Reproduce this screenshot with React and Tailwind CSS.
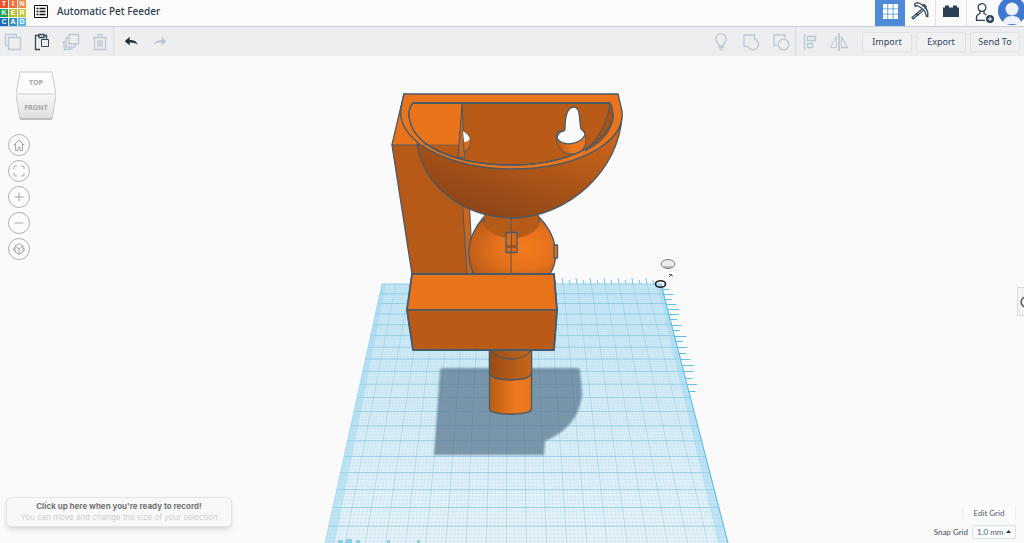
import React from "react";

const GRID = { left: 382, right: 661, top: 284, bottom: 543, bottomLeft: 325, bottomRight: 728 };

const edgeX = (t, y) => {
  const k = (y - GRID.top) / (GRID.bottom - GRID.top);
  const l = GRID.left + (GRID.bottomLeft - GRID.left) * k;
  const r = GRID.right + (GRID.bottomRight - GRID.right) * k;
  return l + (r - l) * t;
};

// rows get wider apart towards the viewer
const rowY = (n) => -299 + 583 / (1 - 0.0163 * n);

const columns = (count) =>
  Array.from({ length: count + 1 }, (_, i) => {
    const t = i / count;
    return `M${edgeX(t, 284).toFixed(1)} 284L${edgeX(t, 543).toFixed(1)} 543`;
  }).join("");

const rows = (step) => {
  let d = "";
  for (let n = 0; rowY(n) < 543; n += step) {
    const y = rowY(n);
    d += `M${edgeX(0, y).toFixed(1)} ${y.toFixed(1)}L${edgeX(1, y).toFixed(1)} ${y.toFixed(1)}`;
  }
  return d;
};

const sideTicks = Array.from({ length: 19 }, (_, i) => {
  const y = rowY(i * 0.5 + 0.5);
  const x = edgeX(1, y);
  return `M${x.toFixed(1)} ${Math.round(y) + 0.5}h${i % 5 === 4 ? 12 : i % 2 ? 10 : 7}`;
}).join("");

const topTicks = Array.from({ length: 15 }, (_, i) => `M${556 + i * 7} 284l-1 -${i % 2 ? 6 : 4}`).join("");

const Icon = ({ children, className = "size-5", ...rest }) => (
  <svg
    viewBox="0 0 20 20"
    fill="none"
    stroke="currentColor"
    strokeWidth="1.3"
    className={className}
    aria-hidden="true"
    {...rest}
  >
    {children}
  </svg>
);

const logoTiles = [
  ["T", "bg-[#f0502d]"],
  ["I", "bg-[#f2703a]"],
  ["N", "bg-[#f58a4b]"],
  ["K", "bg-[#1fa35b]"],
  ["E", "bg-[#b3bd2c]"],
  ["R", "bg-[#c3c43c]"],
  ["C", "bg-[#1668b5]"],
  ["A", "bg-[#2e8fcb]"],
  ["D", "bg-[#54b3df]"],
];

const Logo = () => (
  <a href="#home" aria-label="Tinkercad" className="grid h-[26px] w-[26px] shrink-0 grid-cols-3 content-end gap-px">
    {logoTiles.map(([letter, color]) => (
      <span
        key={letter}
        className={`flex h-2 items-center justify-center font-['Liberation_Sans',sans-serif] text-[7px] leading-[8px] font-bold text-white ${color}`}
      >
        {letter}
      </span>
    ))}
  </a>
);

const Header = () => (
  <header className="flex h-[27px] items-center border-b border-[#c5cfdd] bg-[#fbfbfb]">
    <Logo />
    <button aria-label="Designs" className="mb-1 ml-2 text-[#111]">
      <svg viewBox="0 0 14 13" fill="none" stroke="currentColor" className="h-[13px] w-[14px]" aria-hidden="true">
        <path d="M.5.5h13v12H.5z" strokeWidth="1" />
        <path d="M2.5 3.5h2M2.5 6.5h2M2.5 9.5h2M5.5 3.5h6M5.5 6.5h6M5.5 9.5h6" strokeWidth="1.3" />
      </svg>
    </button>
    <h1 className="mb-1 ml-[9px] font-['Noto_Sans','Open_Sans',sans-serif] text-[10px] leading-4 font-medium text-[#2c3e52]">
      Automatic Pet Feeder
    </h1>
    <div className="ml-auto flex h-full items-center text-[#2b3f55]">
      <button aria-label="Workplane" className="flex h-full w-[30px] items-center justify-center bg-[#4f8ad6] text-white">
        <svg viewBox="0 0 15 15" fill="currentColor" className="mb-1 size-[15px]" aria-hidden="true">
          <path d="M0 0h4.4v4.4H0zM5.2 0h4.5v4.4H5.2zM10.5 0H15v4.4h-4.5zM0 5.2h4.4v4.5H0zM5.2 5.2h4.5v4.5H5.2zM10.5 5.2H15v4.5h-4.5zM0 10.5h4.4V15H0zM5.2 10.5h4.5V15H5.2zM10.5 10.5H15V15h-4.5z" />
        </svg>
      </button>
      <button aria-label="Blocks" className="flex h-full w-[31px] items-center justify-center border-r border-[#dde3ea]">
        <Icon strokeWidth="1.2" className="mb-1 size-5">
          <path d="M4.5 3.2 7 1.6c4.8.8 9.6 5.2 10.8 9.6v4.3l-1.5-.3c-.4-4.4-4.2-8.6-9.3-10.7l-1.7.9zM12.2 5.3l2-1.8 2.2 2.2-1.8 2M11.8 8.2 2 16.6 3.2 18 13 9.6M7 12.3l2 2" />
        </Icon>
      </button>
      <button aria-label="Bricks" className="flex h-full w-[31px] items-center justify-center border-r border-[#dde3ea]">
        <svg viewBox="0 0 16 12" fill="currentColor" className="mb-1 h-3 w-4" aria-hidden="true">
          <path d="M0 2.500h2V.5h4v2h4v-2h4v2h2V12H0z" />
        </svg>
      </button>
      <button aria-label="Invite people" className="flex h-full w-[31px] items-center justify-center">
        <Icon strokeWidth="1.3" className="ml-1 size-5">
          <circle cx="7" cy="4.500" r="3.900" />
          <path d="M5 8v2.500c-2 1-3.500 2-3.500 3.500v3.300h8.500M9 8v2.500l2.500 1.500" />
          <circle cx="15" cy="16" r="4" fill="currentColor" stroke="none" />
          <path d="M12.800 16h4.400M15 13.800v4.400" stroke="white" strokeWidth="1" />
        </Icon>
      </button>
      <button aria-label="Account" className="h-full w-[26px] overflow-hidden">
        <svg viewBox="0 0 26 26" className="h-[26px] w-[26px]" aria-hidden="true">
          <circle cx="14" cy="11" r="14" fill="#3f78d0" />
          <circle cx="14" cy="9" r="6.500" fill="#eef3fb" />
          <path d="M5 24c0-5 3-8 9-8s9 3 9 8z" fill="#eef3fb" />
        </svg>
      </button>
    </div>
  </header>
);

const ToolButton = ({ label, className = "", children }) => (
  <button aria-label={label} className={`flex size-5 shrink-0 items-center justify-center ${className}`}>
    {children}
  </button>
);

const Divider = () => <span className="h-full w-px bg-[#d3dae2]" />;

const Toolbar = () => (
  <div className="flex h-[29px] items-center bg-[#eceef0] text-[#bcc8d4]">
    <div className="flex h-full items-center gap-[9px] pl-[3px]">
      <ToolButton label="Copy">
        <Icon>
          <path d="M5.500 13.500H2.500v-11h11v3M5.500 5.500h12v12h-12z" />
        </Icon>
      </ToolButton>
      <ToolButton label="Paste" className="text-[#3a444e]">
        <Icon>
          <path d="M8 17.500H3.500v-14H7M12 3.500h2.500V7M7 2.500h5v3H7z" />
          <path d="M9.500 7.500h7v7h-7z" strokeWidth="1" />
        </Icon>
      </ToolButton>
      <ToolButton label="Duplicate">
        <Icon>
          <path d="M8 2.500h9.500v9.500H8zM8 6H5v9h9v-3M5 9.500 2.500 10l1 7.500 8-.5" />
        </Icon>
      </ToolButton>
      <ToolButton label="Delete">
        <Icon>
          <path d="M3 5.500h14M8 5V2.500h4V5M4.500 6v11.500h11V6M8 8v7M10 8v7M12 8v7" />
        </Icon>
      </ToolButton>
    </div>
    <div className="flex h-full items-center gap-2 pl-[3px]">
      <Divider />
      <ToolButton label="Undo" className="text-[#22303c]">
        <Icon className="size-4" stroke="none" fill="currentColor">
          <path d="M1 9 7 3.500v4c6 0 9 2 10 6-2-2-6-3-10-2.800v3.800z" />
        </Icon>
      </ToolButton>
      <ToolButton label="Redo">
        <Icon className="size-4" stroke="none" fill="currentColor">
          <path d="M18 9 12 3.500v4c-5 0-8.500 2-10 6 3-2 6-3 10-2.800v3.800z" />
        </Icon>
      </ToolButton>
    </div>
    <div className="ml-auto flex h-full items-center gap-[10px]">
      <ToolButton label="Show all">
        <Icon>
          <path d="M7.500 14v-2C5.500 10.500 4.800 9 4.800 7a5.200 5.200 0 0 1 10.400 0c0 2-.7 3.500-2.700 5v2z" />
          <path d="M7.500 15.500h5M8.500 17.500h3" strokeWidth="1.600" />
        </Icon>
      </ToolButton>
      <ToolButton label="Group">
        <Icon>
          <path d="M3 3h10.500v4a5.500 5.500 0 1 1-6.500 7.500H3z" />
        </Icon>
      </ToolButton>
      <ToolButton label="Ungroup">
        <Icon>
          <path d="M6 13.500H3V3h11v3" />
          <circle cx="12.500" cy="12.500" r="5.300" />
        </Icon>
      </ToolButton>
    </div>
    <div className="flex h-full items-center gap-[9px] pl-1">
      <div className="flex h-full items-center gap-1">
        <Divider />
        <ToolButton label="Align">
          <Icon>
            <path d="M4.500 2v16M7.500 4.500h8v4h-8zM7.500 11.500h5v4h-5z" />
          </Icon>
        </ToolButton>
      </div>
      <ToolButton label="Mirror">
        <Icon>
          <path d="M10 1v18" strokeWidth="1.800" />
          <path d="M7.500 4.500v11H1.500z" strokeWidth="1" />
          <path d="M12.500 4.500v11h6z" />
        </Icon>
      </ToolButton>
    </div>
    <div className="flex gap-1 pr-1 pl-[13px]">
      {["Import", "Export", "Send To"].map((label) => (
        <button
          key={label}
          className="h-5 w-[50px] rounded-xs border border-[#dfe3e8] bg-[#f0f1f3] text-[9px] leading-none whitespace-nowrap text-[#34465a]"
        >
          {label}
        </button>
      ))}
    </div>
  </div>
);

const Workplane = () => (
  <g>
    <path d="M382 284H661L728 543H325z" fill="#e8f4f9" />
    <path d="M382 284H661L728 543H325z" fill="url(#fade)" />
    <path d={columns(100)} stroke="#9fd8ef" strokeWidth="0.500" opacity="0.400" />
    <path d={rows(0.2)} stroke="#9fd8ef" strokeWidth="0.800" opacity="0.350" />
    <path d={columns(20)} stroke="#6bb6d6" strokeWidth="0.700" opacity="0.400" />
    <path d={rows(1)} stroke="#5fb3d6" strokeWidth="0.800" opacity="0.600" />
    <path d="M382 284h4L335 543H325zM657 284h4L728 543H718z" fill="#8fd3f0" opacity="0.400" />
    <path d="M661 284 728 543" stroke="#5bbbe2" />
    <path d={sideTicks} stroke="#5bbfe6" />
    <path d={topTicks} stroke="#6cc6e8" />
    <path d="M338 540h5v3h-5zM346 539h6v4h-6zM356 540h4v3h-4zM387 540h3v3h-3zM417 540h3v3h-3z" fill="#8ccbe4" />
  </g>
);

const Feeder = () => (
  <g stroke="#465a6a" strokeWidth="1.300" strokeLinejoin="round">
    <path
      d="M443 368H577Q580 368 580 371L582 392C581 416 567 432 545 441L544 455H434L440 371Q440 368 443 368z"
      fill="#54758c"
      fillOpacity="0.720"
      stroke="none"
      filter="url(#soft)"
    />

    {/* pole */}
    <path d="M489.500 348V409C489.500 416 531.500 416 531.500 409V348z" fill="url(#pole)" />
    <path d="M489.500 348V374C494 382 527 382 531.500 374V348z" fill="url(#poleDark)" />
    <path d="M491 350C498 362 524 362 531 350" fill="none" />

    {/* rear column */}
    <path d="M404 94 392 145 412 274H472L462 104z" fill="#b85a17" />
    <path d="M404 94 392 145H459L462 100z" fill="#e8731b" stroke="none" />
    <path d="M404 94 392 145H459" fill="none" strokeWidth="1" />
    <path d="M462 195 467 274H473L469 195z" fill="#c9651c" strokeWidth="1" />

    {/* motor housing */}
    <path d="M474 274C466 258 466 238 483 218H540C557 236 560 258 550 274z" fill="url(#ball)" />
    <path d="M554 245h3.500v13H554z" fill="#e8731b" />
    <path d="M484 215V226C496 242 528 242 539 226V215z" fill="#b65b17" stroke="none" />
    <path d="M484 216v7M539 216v7M511 217v57" fill="none" strokeWidth="1" />
    <path d="M506 232.500h11v20h-11z" fill="#d86b1c" />
    <path d="M507 245h9v3h-9z" fill="#a8500f" stroke="none" />
    <path d="M511.500 233v19" strokeWidth="1" />

    {/* bowl */}
    <path d="M417 144C424 190 468 218 513 218C568 217 619 171 622 116L513 160z" fill="url(#bowl)" />
    <path d="M404 94H618L622 111C626 144 574 169 513 169C452 169 396 143 401 108z" fill="#ea741b" />
    <path d="M413 103H610C614 112 614 118 611 124C597 150 560 165 512 165C458 165 416 148 410 121C408 114 409 108 413 103z" fill="#b95b17" />
    <path d="M413 104H462L459 145H421C414 138 411 130 410 121C408 114 409 108 413 104z" fill="#e8731b" stroke="none" />
    <path d="M422 145H459" strokeWidth="1" strokeOpacity="0.600" />
    <path d="M462 104 465 158 458 157z" fill="#c4651d" strokeWidth="1" />
    <path d="M610 103C608 122 598 139 585 151C600 144 611 133 613 118C613 112 612 107 610 103z" fill="#a55117" strokeWidth="1" />
    <path d="M463 130C473 137 473 147 464 152z" fill="#d86b1c" strokeWidth="1" />
    <path d="M463 131Q468 134 470 139Q468 142 464 142z" fill="#fafafa" stroke="none" />
    <path d="M558 131C553 140 560 154 571 154C584 154 589 143 584 131z" fill="url(#pole)" strokeWidth="1" />
    <path d="M565 129C565 118 567 107 574 107C581 107 579 122 581 129Q585 132 585 135C580 145 562 147 557 138Q558 132 563 131Q565 131 565 129z" fill="#fafafa" />
    <path d="M413 103H610C614 112 614 118 611 124C597 150 560 165 512 165C458 165 416 148 410 121C408 114 409 108 413 103z" fill="none" />

    {/* front box */}
    <path d="M412 274H554L557 310H407z" fill="#e8731b" />
    <path d="M407 310H557L554 350H413z" fill="#b95b17" />
    <path d="M412 274H554L557 310 554 350H413L407 310z" fill="none" strokeWidth="1.800" />
  </g>
);

const Scene = () => (
  <svg
    viewBox="0 56 1024 487"
    preserveAspectRatio="xMidYMid slice"
    fill="none"
    className="absolute inset-0 size-full"
    role="img"
    aria-label="Pet feeder model on the workplane"
  >
    <defs>
      <linearGradient id="fade" x1="0" y1="0" x2="0" y2="1">
        <stop offset="0" stopColor="#b5e0f2" stopOpacity="0.600" />
        <stop offset="1" stopColor="#e9f2f6" stopOpacity="0.500" />
      </linearGradient>
      <linearGradient id="pole">
        <stop offset="0" stopColor="#b85c18" />
        <stop offset="0.600" stopColor="#ee781d" />
        <stop offset="1" stopColor="#e8741d" />
      </linearGradient>
      <linearGradient id="poleDark">
        <stop offset="0" stopColor="#984b13" />
        <stop offset="1" stopColor="#c9661c" />
      </linearGradient>
      <radialGradient id="ball" cx="0.650" cy="0.550" r="0.700">
        <stop offset="0" stopColor="#f47b1e" />
        <stop offset="0.500" stopColor="#e5711c" />
        <stop offset="1" stopColor="#bb5c18" />
      </radialGradient>
      <linearGradient id="bowl" x1="0.300" y1="1" x2="0.850" y2="0.200">
        <stop offset="0" stopColor="#8b4516" />
        <stop offset="0.500" stopColor="#a85318" />
        <stop offset="1" stopColor="#c9641b" />
      </linearGradient>
      <filter id="soft">
        <feGaussianBlur stdDeviation="0.800" />
      </filter>
    </defs>
    <Workplane />
    <Feeder />
    <ellipse cx="668" cy="264" rx="7" ry="4.500" fill="#ececec" stroke="#7a7a7a" />
    <path d="M664 267h8" stroke="#8a8a8a" />
    <ellipse cx="671" cy="275" rx="6" ry="4" fill="#fff" stroke="#eee" />
    <path d="m669 274 4 2m-4 1 3-3" stroke="#555" />
    <ellipse cx="660.500" cy="284" rx="5" ry="3.300" stroke="#222" strokeWidth="1.600" />
  </svg>
);

const ViewCube = () => (
  <button aria-label="View cube" className="h-[50px] w-10">
    <svg viewBox="0 0 40 50" fill="none" className="h-[50px] w-10">
      <path d="M4 1h32l4 22-4 25H4L0 23z" fill="#fcfcfc" stroke="#c9c9c9" />
      <path d="M0 23h40l-4 25H4z" fill="url(#cube)" stroke="#cfcfcf" />
      <path d="M4 48h32" stroke="#b5b5b5" strokeWidth="1.500" />
      <defs>
        <linearGradient id="cube" x1="0" y1="0" x2="0" y2="1">
          <stop offset="0" stopColor="#f7f7f7" />
          <stop offset="1" stopColor="#dedede" />
        </linearGradient>
      </defs>
      <g fill="#a3a5a8" textAnchor="middle" className="text-[7px] font-bold">
        <text x="20" y="14">TOP</text>
        <text x="20" y="39">FRONT</text>
      </g>
    </svg>
  </button>
);

const views = [
  ["Home view", "M4.500 10.500 10 5l5.500 5.500M6.500 9v6.500h2.500v-3h2v3h2.500V9"],
  ["Fit all in view", "M5 8V6q0-1 1-1h2M12 5h2q1 0 1 1v2M15 12v2q0 1-1 1h-2M8 15H6q-1 0-1-1v-2"],
  ["Zoom in", "M10 5.500v9M5.500 10h9"],
  ["Zoom out", "M5.500 10h9"],
  ["Switch to orthographic view", "M10 4.500 14 7v5.500L10 15.500 6 12.500V7zM6 7l4 3 4-3M10 10v5.500M6 9.500l-2 1 4.500 4M14 9.500l2 1-4.500 4"],
];

const Canvas = () => (
  <main className="relative flex flex-1 flex-col overflow-hidden bg-[#fafafa]">
    <Scene />
    <div className="relative flex flex-1 items-start justify-between">
      <nav className="flex flex-col gap-1 pt-[15px] pl-2" aria-label="Camera">
        <div className="mb-[3px] pl-2">
          <ViewCube />
        </div>
        {views.map(([label, d]) => (
          <button
            key={label}
            aria-label={label}
            className="flex size-[22px] items-center justify-center rounded-full border border-[#b2b2b2] bg-[#fcfcfc] text-[#a6a6a6]"
          >
            <Icon strokeWidth="1">
              <path d={d} />
            </Icon>
          </button>
        ))}
      </nav>
      <button
        aria-label="Toggle side panel"
        className="mt-[231px] h-[29px] w-[7px] overflow-hidden border-y border-l border-[#d5dbe1] bg-[#f2f3f4] text-[#555]"
      >
        <svg viewBox="0 0 6 12" fill="none" stroke="currentColor" strokeWidth="1.500" className="h-3 w-[6px]" aria-hidden="true">
          <path d="M6 1Q0 6 6 11" />
        </svg>
      </button>
    </div>
    <div className="relative flex items-end justify-between pr-2 pb-1 pl-[6px]">
      <div
        role="status"
        className="mb-3 w-[226px] rounded-[5px] border border-[#e3e4e6] bg-[#f8f8f8] py-[3px] text-center font-['Inter','Liberation_Sans',sans-serif] text-[8px] leading-[11px] shadow-md"
      >
        <p className="font-bold text-[#747474]">Click up here when you&apos;re ready to record!</p>
        <p className="text-[#cfcfcf]">You can move and change the size of your selection</p>
      </div>
      <div className="flex flex-col items-end gap-[5px] font-['Lato','Noto_Sans',sans-serif] text-[8px] text-[#55606c]">
        <button className="h-[14px] w-[54px] border-x border-[#eceef0] leading-none">Edit Grid</button>
        <div className="flex items-center gap-1">
          <label htmlFor="snap" className="text-[#3d4d5e]">
            Snap Grid
          </label>
          <div className="relative">
            <select
              id="snap"
              defaultValue="1.0"
              className="block h-[14px] w-11 appearance-none rounded-xs border border-[#d8e2ea] bg-[#fafafa] pl-1 text-[8px] leading-none"
            >
              <option value="0.5">0.5 mm</option>
              <option value="1.0">1.0 mm</option>
              <option value="2.0">2.0 mm</option>
            </select>
            <svg viewBox="0 0 5 3" fill="#333" className="pointer-events-none absolute top-[5px] right-[5px] h-[3px] w-[5px]" aria-hidden="true">
              <path d="M0 3 2.500 0 5 3z" />
            </svg>
          </div>
        </div>
      </div>
    </div>
  </main>
);

const App = () => (
  <div className="flex min-h-screen flex-col overflow-hidden font-['Noto_Sans','Open_Sans',sans-serif]">
    <Header />
    <Toolbar />
    <Canvas />
  </div>
);

export default App;
